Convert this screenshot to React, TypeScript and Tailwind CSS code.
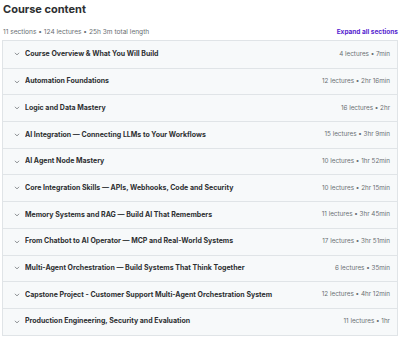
import React from 'react';

const sections = [
  { title: 'Course Overview & What You Will Build', meta: '4 lectures • 7min' },
  { title: 'Automation Foundations', meta: '12 lectures • 2hr 16min' },
  { title: 'Logic and Data Mastery', meta: '16 lectures • 2hr' },
  { title: 'AI Integration — Connecting LLMs to Your Workflows', meta: '15 lectures • 3hr 9min' },
  { title: 'AI Agent Node Mastery', meta: '10 lectures • 1hr 52min' },
  { title: 'Core Integration Skills — APIs, Webhooks, Code and Security', meta: '10 lectures • 2hr 15min' },
  { title: 'Memory Systems and RAG — Build AI That Remembers', meta: '11 lectures • 3hr 45min' },
  { title: 'From Chatbot to AI Operator — MCP and Real-World Systems', meta: '17 lectures • 3hr 51min' },
  { title: 'Multi-Agent Orchestration — Build Systems That Think Together', meta: '6 lectures • 35min' },
  { title: 'Capstone Project - Customer Support Multi-Agent Orchestration System', meta: '12 lectures • 4hr 12min' },
  { title: 'Production Engineering, Security and Evaluation', meta: '11 lectures • 1hr' },
];

const Chevron = () => (
  <svg width="6" height="6" viewBox="0 0 10 10" fill="none" className="shrink-0">
    <path d="M2 3.5 L5 6.5 L8 3.5" stroke="#6a6f73" strokeWidth="1.3" strokeLinecap="round" strokeLinejoin="round" />
  </svg>
);

const App = () => {
  return (
    <div className="w-[400px] h-[337px] bg-white text-[#2d2f31] overflow-hidden" style={{ fontFamily: 'Inter, "Noto Sans", sans-serif' }}>
      <h2 className="pl-[3px] pt-[2px] text-[11px] leading-[15px] font-bold">Course content</h2>
      <div className="flex items-center justify-between pl-[3px] pr-[2px] mt-[10px] h-[11px]">
        <span className="text-[6.6px] text-[#6a6f73]">11 sections • 124 lectures • 25h 3m total length</span>
        <button className="text-[6.5px] font-bold text-[#5624d0]">Expand all sections</button>
      </div>
      <div className="mx-[2px] mt-[2px] border border-[#e0e4e7]">
        {sections.map((s, i) => (
          <div
            key={i}
            className={'flex items-center h-[26.7px] bg-[#f7f9fa] pl-[11px] pr-[7px] ' + (i > 0 ? 'border-t border-[#e0e4e7]' : '')}
          >
            <Chevron />
            <span className="ml-[5px] text-[7px] font-bold text-[#2d2f31] flex-1 truncate">{s.title}</span>
            <span className="text-[6.3px] text-[#6a6f73] whitespace-nowrap">{s.meta}</span>
          </div>
        ))}
      </div>
    </div>
  );
};

export default App;
